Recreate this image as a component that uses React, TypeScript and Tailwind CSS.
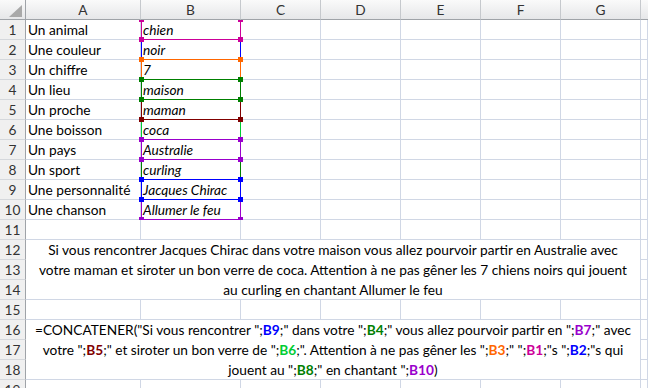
import type { ReactNode } from "react";

type Entry = { label: string; value: string };

const entries: Entry[] = [
  { label: "Un animal", value: "chien" },
  { label: "Une couleur", value: "noir" },
  { label: "Un chiffre", value: "7" },
  { label: "Un lieu", value: "maison" },
  { label: "Un proche", value: "maman" },
  { label: "Une boisson", value: "coca" },
  { label: "Un pays", value: "Australie" },
  { label: "Un sport", value: "curling" },
  { label: "Une personnalité", value: "Jacques Chirac" },
  { label: "Une chanson", value: "Allumer le feu" },
];

// drawn bottom first: the first reference of the formula ends up on top
const ranges: { row: number; color: string }[] = [
  { row: 10, color: "#9900cc" },
  { row: 8, color: "#008000" },
  { row: 2, color: "#0000ff" },
  { row: 1, color: "#cc0099" },
  { row: 3, color: "#ff6600" },
  { row: 6, color: "#00cc33" },
  { row: 5, color: "#800000" },
  { row: 7, color: "#9900cc" },
  { row: 4, color: "#008000" },
  { row: 9, color: "#0000ff" },
];

const grid = "border-r border-b border-[#d0d7e5]";
const font = { fontFamily: "Lato, 'Open Sans', sans-serif" };

function RowHead({ n }: { n: number }) {
  return (
    <div className="w-[26px] h-[20px] shrink-0 flex items-center justify-center bg-[#f0f0f0] border-r border-r-[#9fa3a8] border-b border-b-[#d5d8dc] text-[#333]">
      {n}
    </div>
  );
}

function Row({ n, a, b }: { n: number; a?: string; b?: string }) {
  return (
    <div className="flex h-[20px]">
      <RowHead n={n} />
      <div className={`w-[115px] shrink-0 pl-[2px] whitespace-nowrap ${grid}`}>{a}</div>
      <div className={`w-[100px] shrink-0 pl-[2px] italic whitespace-nowrap ${grid}`}>{b}</div>
      <div className={`w-[80px] shrink-0 ${grid}`} />
      <div className={`w-[80px] shrink-0 ${grid}`} />
      <div className={`w-[80px] shrink-0 ${grid}`} />
      <div className={`w-[80px] shrink-0 ${grid}`} />
      <div className={`w-[80px] shrink-0 ${grid}`} />
      <div className={`flex-1 ${grid}`} />
    </div>
  );
}

function Merged({ start, lines }: { start: number; lines: ReactNode[] }) {
  return (
    <div className="flex">
      <div className="flex flex-col">
        {[0, 1, 2].map((i) => (
          <RowHead key={i} n={start + i} />
        ))}
      </div>
      <div className={`w-[615px] shrink-0 flex flex-col ${grid}`}>
        {lines.map((line, i) => (
          <div key={i} className="h-[20px] shrink-0 text-center whitespace-nowrap last:h-[19px]">
            {line}
          </div>
        ))}
      </div>
      <div className="flex-1 flex flex-col">
        {[0, 1, 2].map((i) => (
          <div key={i} className={`h-[20px] ${grid}`} />
        ))}
      </div>
    </div>
  );
}

function Ref({ c, children }: { c: string; children: ReactNode }) {
  return (
    <b className="font-bold" style={{ color: c }}>
      {children}
    </b>
  );
}

function Handle({ color, className }: { color: string; className: string }) {
  return <span className={`absolute w-[5px] h-[5px] ${className}`} style={{ background: color }} />;
}

export default function App() {
  return (
    <div className="w-[648px] h-[388px] overflow-hidden bg-white text-[13.7px] leading-[20px] text-black" style={font}>
      {/* column headers */}
      <div className="flex h-[20px] bg-gradient-to-b from-[#fafafa] to-[#e5e6e8] text-[#333]">
        <div className="w-[26px] shrink-0 relative border-r border-r-[#9fa3a8] border-b border-b-[#9fa3a8]">
          <svg className="absolute left-[9px] top-[5px]" width="13" height="12" viewBox="0 0 13 12">
            <polygon points="13,0 13,12 0,12" fill="#a9a9a9" />
          </svg>
        </div>
        {[
          ["A", "w-[115px]"],
          ["B", "w-[100px]"],
          ["C", "w-[80px]"],
          ["D", "w-[80px]"],
          ["E", "w-[80px]"],
          ["F", "w-[80px]"],
          ["G", "w-[80px]"],
        ].map(([l, w]) => (
          <div
            key={l}
            className={`${w} shrink-0 flex items-center justify-center border-r border-r-[#c6c9cd] border-b border-b-[#9fa3a8]`}
          >
            {l}
          </div>
        ))}
        <div className="flex-1 border-b border-b-[#9fa3a8]" />
      </div>

      {/* rows 1-10 with the colored reference ranges */}
      <div className="relative">
        {entries.map((e, i) => (
          <Row key={i} n={i + 1} a={e.label} b={e.value} />
        ))}
        <div className="absolute inset-0 overflow-hidden pointer-events-none">
          {ranges.map((r) => (
            <div
              key={r.row}
              className="absolute left-[141px] w-[100px] h-[21px] border"
              style={{ top: (r.row - 1) * 20 - 1, borderColor: r.color }}
            >
              <Handle color={r.color} className="-left-[3px] -top-[3px]" />
              <Handle color={r.color} className="-right-[3px] -top-[3px]" />
              <Handle color={r.color} className="-left-[3px] -bottom-[3px]" />
              <Handle color={r.color} className="-right-[3px] -bottom-[3px]" />
            </div>
          ))}
        </div>
      </div>

      <Row n={11} />
      <Merged
        start={12}
        lines={[
          "Si vous rencontrer Jacques Chirac dans votre maison vous allez pourvoir partir en Australie avec",
          "votre maman et siroter un bon verre de coca. Attention à ne pas gêner les 7 chiens noirs qui jouent",
          "au curling en chantant Allumer le feu",
        ]}
      />
      <Row n={15} />
      <Merged
        start={16}
        lines={[
          <>
            {'=CONCATENER("Si vous rencontrer ";'}
            <Ref c="#0000ff">B9</Ref>
            {';" dans votre ";'}
            <Ref c="#008000">B4</Ref>
            {';" vous allez pourvoir partir en ";'}
            <Ref c="#9900cc">B7</Ref>
            {';" avec'}
          </>,
          <>
            {'votre ";'}
            <Ref c="#800000">B5</Ref>
            {';" et siroter un bon verre de ";'}
            <Ref c="#00cc33">B6</Ref>
            {';". Attention à ne pas gêner les ";'}
            <Ref c="#ff6600">B3</Ref>
            {';" ";'}
            <Ref c="#cc0099">B1</Ref>
            {';"s ";'}
            <Ref c="#0000ff">B2</Ref>
            {';"s qui'}
          </>,
          <>
            {'jouent au ";'}
            <Ref c="#008000">B8</Ref>
            {';" en chantant ";'}
            <Ref c="#9900cc">B10</Ref>
            {")"}
          </>,
        ]}
      />
      <Row n={19} />
    </div>
  );
}
